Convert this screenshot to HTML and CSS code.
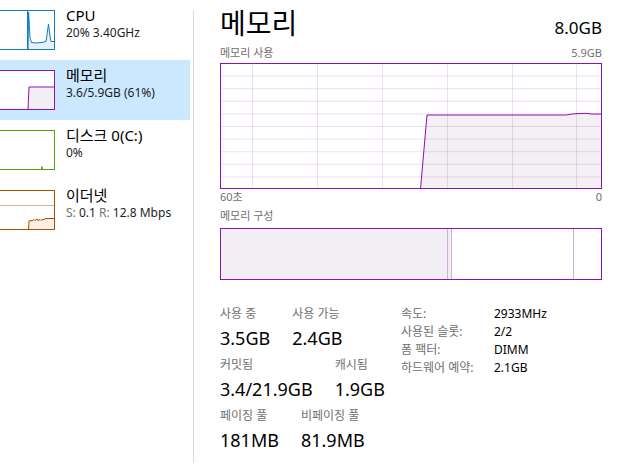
FILE: index.html
```html
<!DOCTYPE html>
<html lang="ko">
<head>
<meta charset="utf-8">
<title>메모리</title>
<link rel="stylesheet" href="styles.css">
</head>
<body>
<div class="app">
  <nav class="sidebar">
    <div class="item">
      <svg class="thumb" viewBox="0 0 65 40" width="65" height="40">
        <path d="M38,39.5 L38.6,2 L40,28 L41.5,32.5 L46,33 L52,32.5 L56,31.5 L58.5,14 L60,26 L61,31.5 L65,31.5 L65,39.5 Z" fill="#e7f1f9"/>
        <line x1="37.5" y1="0" x2="37.5" y2="40" stroke="#117dbb" stroke-width="1"/>
        <path d="M38,39.5 L38.6,2 L40,28 L41.5,32.5 L46,33 L52,32.5 L56,31.5 L58.5,14 L60,26 L61,31.5 L65,31.5" fill="none" stroke="#117dbb" stroke-width="1"/>
        <rect x="0.5" y="0.5" width="64" height="39" fill="none" stroke="#117dbb"/>
      </svg>
      <div class="info">
        <div class="name">CPU</div>
        <div class="sub">20% 3.40GHz</div>
      </div>
    </div>
    <div class="item selected">
      <svg class="thumb" viewBox="0 0 65 40" width="65" height="40">
        <rect x="0" y="0" width="65" height="40" fill="#ffffff"/>
        <path d="M38,39.5 L39,17 L65,17 L65,39.5 Z" fill="#f2eff4"/>
        <path d="M38,39.5 L39,17 L65,17" fill="none" stroke="#8b12ae" stroke-width="1"/>
        <rect x="0.5" y="0.5" width="64" height="39" fill="none" stroke="#8b12ae"/>
      </svg>
      <div class="info">
        <div class="name">메모리</div>
        <div class="sub">3.6/5.9GB (61%)</div>
      </div>
    </div>
    <div class="item">
      <svg class="thumb" viewBox="0 0 65 40" width="65" height="40">
        <path d="M51.5,39 L52,36.5 L52.5,39" fill="none" stroke="#4da60c" stroke-width="1"/>
        <rect x="0.5" y="0.5" width="64" height="39" fill="none" stroke="#4da60c"/>
      </svg>
      <div class="info">
        <div class="name">디스크 0(C:)</div>
        <div class="sub">0%</div>
      </div>
    </div>
    <div class="item">
      <svg class="thumb" viewBox="0 0 65 40" width="65" height="40">
        <line x1="0" y1="15.5" x2="65" y2="15.5" stroke="#d8b08a" stroke-width="1"/>
        <path d="M38.5,39.5 L39,31 L41,30.5 L42,31 L44,29.5 L45,30.5 L47,29 L48,30.5 L50,29.5 L51,30.5 L53,29 L54,30 L55,28.5 L65,28.5 L65,39.5 Z" fill="#fcefe3"/>
        <path d="M38.5,39.5 L39,31 L41,30.5 L42,31 L44,29.5 L45,30.5 L47,29 L48,30.5 L50,29.5 L51,30.5 L53,29 L54,30 L55,28.5 L65,28.5" fill="none" stroke="#a74f01" stroke-width="1"/>
        <rect x="0.5" y="0.5" width="64" height="39" fill="none" stroke="#a74f01"/>
      </svg>
      <div class="info">
        <div class="name">이더넷</div>
        <div class="sub"><span class="dim">S:</span> 0.1 <span class="dim">R:</span> 12.8 Mbps</div>
      </div>
    </div>
  </nav>
  <div class="divider"></div>
  <main class="main">
    <header class="head">
      <h1 class="title">메모리</h1>
      <span class="total">8.0GB</span>
    </header>
    <div class="cap-row first"><span>메모리 사용</span><span>5.9GB</span></div>
    <svg class="graph" viewBox="0 0 382 126" width="382" height="126">
      <path d="M200.5,126 L207,52 L346,52 L352,51 L360,50.5 L366,50.3 L372,51 L382,51 L382,126 Z" fill="#f3f0f4"/>
      <g stroke="#8b12ae" stroke-opacity="0.14" stroke-width="1">
        <line x1="0" y1="13.1" x2="382" y2="13.1"/>
        <line x1="0" y1="25.7" x2="382" y2="25.7"/>
        <line x1="0" y1="38.3" x2="382" y2="38.3"/>
        <line x1="0" y1="50.9" x2="382" y2="50.9"/>
        <line x1="0" y1="63.5" x2="382" y2="63.5"/>
        <line x1="0" y1="76.1" x2="382" y2="76.1"/>
        <line x1="0" y1="88.7" x2="382" y2="88.7"/>
        <line x1="0" y1="101.3" x2="382" y2="101.3"/>
        <line x1="0" y1="113.9" x2="382" y2="113.9"/>
        <line x1="32.5" y1="0" x2="32.5" y2="126"/>
        <line x1="97.5" y1="0" x2="97.5" y2="126"/>
        <line x1="162.5" y1="0" x2="162.5" y2="126"/>
        <line x1="227.5" y1="0" x2="227.5" y2="126"/>
        <line x1="292.5" y1="0" x2="292.5" y2="126"/>
        <line x1="356.5" y1="0" x2="356.5" y2="126"/>
      </g>
      <path d="M200.5,126 L207,52 L346,52 L352,51 L360,50.5 L366,50.3 L372,51 L382,51" fill="none" stroke="#8b12ae" stroke-width="1"/>
      <rect x="0.5" y="0.5" width="381" height="125" fill="none" stroke="#8b12ae"/>
    </svg>
    <div class="cap-row axis"><span>60초</span><span>0</span></div>
    <div class="cap-row section"><span>메모리 구성</span></div>
    <div class="comp">
      <div class="seg inuse"></div>
      <div class="seg modified"></div>
      <div class="seg standby"></div>
      <div class="seg free"></div>
    </div>
    <section class="stats">
      <div class="left">
        <div class="group">
          <div class="stat"><div class="lbl">사용 중</div><div class="val">3.5GB</div></div>
          <div class="stat"><div class="lbl">사용 가능</div><div class="val">2.4GB</div></div>
        </div>
        <div class="group">
          <div class="stat"><div class="lbl">커밋됨</div><div class="val">3.4/21.9GB</div></div>
          <div class="stat"><div class="lbl">캐시됨</div><div class="val">1.9GB</div></div>
        </div>
        <div class="group">
          <div class="stat"><div class="lbl">페이징 풀</div><div class="val">181MB</div></div>
          <div class="stat"><div class="lbl">비페이징 풀</div><div class="val">81.9MB</div></div>
        </div>
      </div>
      <dl class="specs">
        <dt>속도:</dt><dd>2933MHz</dd>
        <dt>사용된 슬롯:</dt><dd>2/2</dd>
        <dt>폼 팩터:</dt><dd>DIMM</dd>
        <dt>하드웨어 예약:</dt><dd>2.1GB</dd>
      </dl>
    </section>
  </main>
</div>
</body>
</html>
```

FILE: styles.css
```css
* { box-sizing: border-box; }

html, body {
  margin: 0;
  padding: 0;
  background: #ffffff;
}

body {
  width: 618px;
  height: 473px;
  overflow: hidden;
  font-family: "Noto Sans", "Noto Sans CJK KR", sans-serif;
  color: #000000;
}

.app {
  display: flex;
  align-items: flex-start;
}

.sidebar {
  width: 190px;
  flex: none;
  overflow: hidden;
}

.item {
  display: flex;
  height: 60px;
}

.item.selected {
  background: #cce8ff;
}

.thumb {
  display: block;
  flex: none;
  margin-top: 10px;
  margin-left: -10px;
  width: 65px;
  height: 40px;
  background: #ffffff;
}

.info {
  padding-left: 11px;
  padding-top: 5px;
  white-space: nowrap;
}

.name {
  height: 20px;
  font-size: 15px;
  line-height: 20px;
  color: #000000;
}

.sub {
  height: 16px;
  font-size: 12px;
  line-height: 16px;
  color: #1e1e1e;
}

.sub .dim {
  color: #707070;
}

.divider {
  flex: none;
  width: 1px;
  height: 453px;
  margin-left: 3px;
  margin-top: 10px;
  background: #dadada;
}

.main {
  flex: none;
  width: 408px;
  padding-left: 26px;
}

.head {
  display: flex;
  justify-content: space-between;
  align-items: baseline;
  height: 40px;
  padding-top: 5px;
}

.title {
  margin: 0;
  height: 35px;
  font-size: 28px;
  line-height: 36px;
  font-weight: normal;
}

.total {
  font-size: 17px;
  line-height: 36px;
}

.cap-row {
  display: flex;
  justify-content: space-between;
  height: 14px;
  font-size: 11px;
  line-height: 14px;
  color: #707070;
}

.cap-row.first { margin-top: 6px; }
.cap-row.axis { margin-top: 1px; }
.cap-row.section { margin-top: 5px; }

.graph {
  display: block;
  margin-top: 3px;
  width: 382px;
  height: 126px;
}

.comp {
  display: flex;
  margin-top: 5px;
  width: 382px;
  height: 52px;
  border: 1px solid #8b12ae;
}

.seg { height: 100%; }

.inuse {
  width: 226px;
  background: #f2eff4;
}

.modified {
  width: 5px;
  background: #f2eff4;
  border-left: 1px solid #cdb2d6;
  border-right: 1px solid #cdb2d6;
}

.standby {
  width: 122px;
  border-right: 1px solid #cdb2d6;
}

.free { flex: 1; }

.stats {
  display: grid;
  grid-template-columns: 181px auto;
  margin-top: 25px;
}

.group {
  display: flex;
  gap: 22px;
  margin-bottom: 6px;
}

.lbl {
  height: 18px;
  font-size: 12px;
  line-height: 18px;
  color: #707070;
  white-space: nowrap;
}

.val {
  height: 24px;
  margin-top: 3px;
  font-size: 18px;
  line-height: 24px;
  color: #000000;
  white-space: nowrap;
}

.specs {
  display: grid;
  grid-template-columns: 93px auto;
  grid-auto-rows: 18px;
  margin: 0;
  font-size: 12px;
  line-height: 18px;
  align-content: start;
}

.specs dt {
  color: #707070;
  white-space: nowrap;
}

.specs dd {
  margin: 0;
  color: #000000;
}
```
